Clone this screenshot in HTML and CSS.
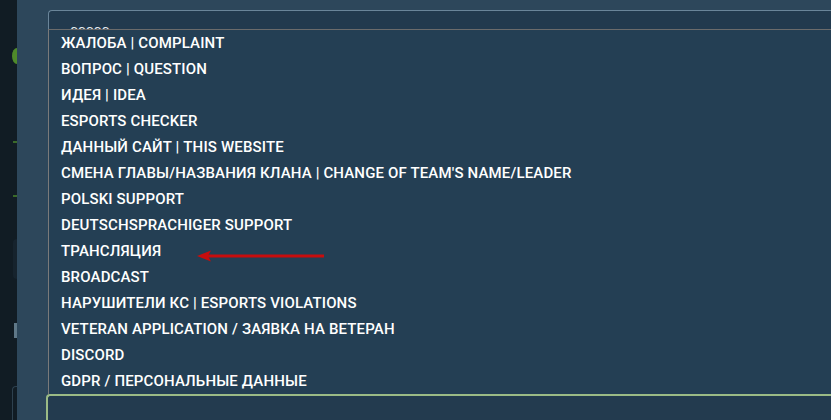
FILE: index.html
```html
<!DOCTYPE html>
<html lang="ru">
<head>
<meta charset="UTF-8" />
<meta name="viewport" content="width=device-width, initial-scale=1" />
<title>Тикет</title>
<link rel="stylesheet" href="styles.css">
</head>
<body>
<div class="rail">
  <div class="rail-dot"></div>
  <div class="rail-tick first"></div>
  <div class="rail-tick"></div>
  <div class="rail-ghost"></div>
  <div class="rail-bar"></div>
  <div class="rail-edge"></div>
</div>
<div class="panel">
  <div class="select">ссссс</div>
  <ul class="options">
    <li>ЖАЛОБА | COMPLAINT</li>
    <li>ВОПРОС | QUESTION</li>
    <li>ИДЕЯ | IDEA</li>
    <li>ESPORTS CHECKER</li>
    <li>ДАННЫЙ САЙТ | THIS WEBSITE</li>
    <li>СМЕНА ГЛАВЫ/НАЗВАНИЯ КЛАНА | CHANGE OF TEAM'S NAME/LEADER</li>
    <li>POLSKI SUPPORT</li>
    <li>DEUTSCHSPRACHIGER SUPPORT</li>
    <li>ТРАНСЛЯЦИЯ</li>
    <li>BROADCAST</li>
    <li>НАРУШИТЕЛИ КС | ESPORTS VIOLATIONS</li>
    <li>VETERAN APPLICATION / ЗАЯВКА НА ВЕТЕРАН</li>
    <li>DISCORD</li>
    <li>GDPR / ПЕРСОНАЛЬНЫЕ ДАННЫЕ</li>
  </ul>
  <div class="message"></div>
</div>
<svg class="pointer" width="140" height="14" viewBox="0 0 140 14">
  <line x1="10" y1="7" x2="128" y2="7" stroke="#c80d0d" stroke-width="3"/>
  <path d="M1 7 L15 1.5 L12 7 L15 12.5 Z" fill="#c80d0d"/>
</svg>
</body>
</html>
```

FILE: styles.css
```css
body {
  margin: 0;
  height: 420px;
  overflow: hidden;
  background-color: #111c24;
  font-family: Roboto, "Liberation Sans", sans-serif;
  color: #ffffff;
  display: flex;
}
.rail {
  width: 17px;
  flex-shrink: 0;
  display: flex;
  flex-direction: column;
  align-items: flex-end;
}
.rail-dot {
  width: 10px;
  height: 16px;
  margin-top: 48px;
  margin-right: -5px;
  border-radius: 50%;
  background-color: #4f8a2a;
}
.rail-tick {
  width: 4px;
  height: 2px;
  margin-top: 52px;
  background-color: #3b6a2a;
}
.rail-tick.first {
  margin-top: 77px;
}
.rail-ghost {
  width: 4px;
  height: 40px;
  margin-top: 42px;
  border-radius: 4px 0 0 4px;
  background-color: #16232d;
}
.rail-bar {
  width: 3px;
  height: 15px;
  margin-top: 44px;
  background-color: #5f7888;
}
.rail-edge {
  width: 4px;
  flex: 1;
  margin-top: 48px;
  border: 1px solid #2e414f;
  border-right: 0;
  border-bottom: 0;
  border-radius: 4px 0 0 0;
}
.panel {
  flex: 1;
  position: relative;
  background-color: #2d475b;
  padding: 10px 0 0 31px;
}
.select {
  height: 40px;
  border: 1px solid #6a8599;
  border-right: 0;
  border-radius: 4px 0 0 4px;
  background-color: #223a4e;
  padding: 10px 0 0 21px;
  font-size: 15px;
  box-sizing: border-box;
  color: #e8eef2;
}
.options {
  position: absolute;
  top: 29px;
  left: 31px;
  right: 0;
  margin: 0;
  padding: 0;
  list-style: none;
  background-color: #243f54;
  border-top: 1px solid #6b6b6b;
  border-left: 1px solid #7a7a7a;
}
.options li {
  height: 26px;
  line-height: 26px;
  padding-left: 12px;
  font-size: 15px;
  font-weight: 500;
  letter-spacing: 0.15px;
  white-space: nowrap;
}
.message {
  margin: 344px 0 0 -2px;
  height: 40px;
  border: 2px solid #9bbb86;
  border-right: 0;
  border-radius: 4px 0 0 0;
  background-color: #233b4f;
}
.pointer {
  position: absolute;
  left: 196px;
  top: 249px;
}
```
